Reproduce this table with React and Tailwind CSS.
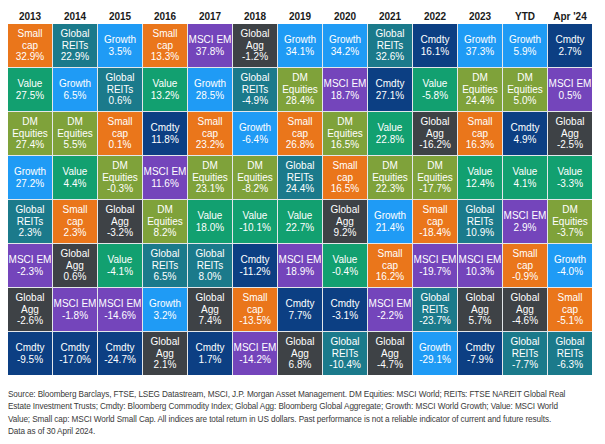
import React from "react";

const colors = {
  small: "bg-[#ea761b]",
  reits: "bg-[#1b7a8b]",
  growth: "bg-[#1f9bf5]",
  em: "bg-[#7445bb]",
  agg: "bg-[#3e4246]",
  value: "bg-[#12a070]",
  dm: "bg-[#7fa23a]",
  cmdty: "bg-[#0c3f83]",
};

const labels = {
  small: ["Small", "cap"],
  reits: ["Global", "REITs"],
  growth: ["Growth"],
  em: ["MSCI EM"],
  agg: ["Global", "Agg"],
  value: ["Value"],
  dm: ["DM", "Equities"],
  cmdty: ["Cmdty"],
};

const columns = [
  { year: "2013", cells: [["small", "32.9%"], ["value", "27.5%"], ["dm", "27.4%"], ["growth", "27.2%"], ["reits", "2.3%"], ["em", "-2.3%"], ["agg", "-2.6%"], ["cmdty", "-9.5%"]] },
  { year: "2014", cells: [["reits", "22.9%"], ["growth", "6.5%"], ["dm", "5.5%"], ["value", "4.4%"], ["small", "2.3%"], ["agg", "0.6%"], ["em", "-1.8%"], ["cmdty", "-17.0%"]] },
  { year: "2015", cells: [["growth", "3.5%"], ["reits", "0.6%"], ["small", "0.1%"], ["dm", "-0.3%"], ["agg", "-3.2%"], ["value", "-4.1%"], ["em", "-14.6%"], ["cmdty", "-24.7%"]] },
  { year: "2016", cells: [["small", "13.3%"], ["value", "13.2%"], ["cmdty", "11.8%"], ["em", "11.6%"], ["dm", "8.2%"], ["reits", "6.5%"], ["growth", "3.2%"], ["agg", "2.1%"]] },
  { year: "2017", cells: [["em", "37.8%"], ["growth", "28.5%"], ["small", "23.2%"], ["dm", "23.1%"], ["value", "18.0%"], ["reits", "8.0%"], ["agg", "7.4%"], ["cmdty", "1.7%"]] },
  { year: "2018", cells: [["agg", "-1.2%"], ["reits", "-4.9%"], ["growth", "-6.4%"], ["dm", "-8.2%"], ["value", "-10.1%"], ["cmdty", "-11.2%"], ["small", "-13.5%"], ["em", "-14.2%"]] },
  { year: "2019", cells: [["growth", "34.1%"], ["dm", "28.4%"], ["small", "26.8%"], ["reits", "24.4%"], ["value", "22.7%"], ["em", "18.9%"], ["cmdty", "7.7%"], ["agg", "6.8%"]] },
  { year: "2020", cells: [["growth", "34.2%"], ["em", "18.7%"], ["dm", "16.5%"], ["small", "16.5%"], ["agg", "9.2%"], ["value", "-0.4%"], ["cmdty", "-3.1%"], ["reits", "-10.4%"]] },
  { year: "2021", cells: [["reits", "32.6%"], ["cmdty", "27.1%"], ["value", "22.8%"], ["dm", "22.3%"], ["growth", "21.4%"], ["small", "16.2%"], ["em", "-2.2%"], ["agg", "-4.7%"]] },
  { year: "2022", cells: [["cmdty", "16.1%"], ["value", "-5.8%"], ["agg", "-16.2%"], ["dm", "-17.7%"], ["small", "-18.4%"], ["em", "-19.7%"], ["reits", "-23.7%"], ["growth", "-29.1%"]] },
  { year: "2023", cells: [["growth", "37.3%"], ["dm", "24.4%"], ["small", "16.3%"], ["value", "12.4%"], ["reits", "10.9%"], ["em", "10.3%"], ["agg", "5.7%"], ["cmdty", "-7.9%"]] },
  { year: "YTD", cells: [["growth", "5.9%"], ["dm", "5.0%"], ["cmdty", "4.9%"], ["value", "4.1%"], ["em", "2.9%"], ["small", "-0.9%"], ["agg", "-4.6%"], ["reits", "-7.7%"]] },
  { year: "Apr '24", cells: [["cmdty", "2.7%"], ["em", "0.5%"], ["agg", "-2.5%"], ["value", "-3.3%"], ["dm", "-3.7%"], ["growth", "-4.0%"], ["small", "-5.1%"], ["reits", "-6.3%"]] },
];

function Cell({ kind, value }) {
  return (
    <div className={`${colors[kind]} flex h-[43px] flex-col items-center justify-center text-center text-[10px] leading-[11.5px] text-white`}>
      {labels[kind].map((l) => (
        <span key={l} className="whitespace-nowrap">{l}</span>
      ))}
      <span>{value}</span>
    </div>
  );
}

export default function App() {
  return (
    <div className="h-[444px] w-[605px] overflow-hidden bg-white px-2 font-['Liberation_Sans',Arial,sans-serif]">
      <div className="flex h-[24px] items-end gap-px pb-[1px]">
        {columns.map((c) => (
          <div key={c.year} className="w-[44px] text-center text-[10px] font-bold leading-[12px] text-[#1a1a1a]">
            {c.year}
          </div>
        ))}
      </div>
      <div className="grid w-fit grid-flow-col grid-cols-[repeat(13,44px)] grid-rows-[repeat(8,43px)] gap-px bg-[#e4e7ea]">
        {columns.map((c) =>
          c.cells.map(([kind, value], i) => (
            <Cell key={c.year + i} kind={kind} value={value} />
          ))
        )}
      </div>
      <div className="mt-[14px] text-[8.2px] leading-[12.3px] tracking-[-0.1px] text-[#3a3a3a]">
        <p className="whitespace-nowrap">Source: Bloomberg Barclays, FTSE, LSEG Datastream, MSCI, J.P. Morgan Asset Management. DM Equities: MSCI World; REITs: FTSE NAREIT Global Real</p>
        <p className="whitespace-nowrap">Estate Investment Trusts; Cmdty: Bloomberg Commodity Index; Global Agg: Bloomberg Global Aggregate; Growth: MSCI World Growth; Value: MSCI World</p>
        <p className="whitespace-nowrap">Value; Small cap: MSCI World Small Cap. All indices are total return in US dollars. Past performance is not a reliable indicator of current and future results.</p>
        <p className="whitespace-nowrap">Data as of 30 April 2024.</p>
      </div>
    </div>
  );
}
